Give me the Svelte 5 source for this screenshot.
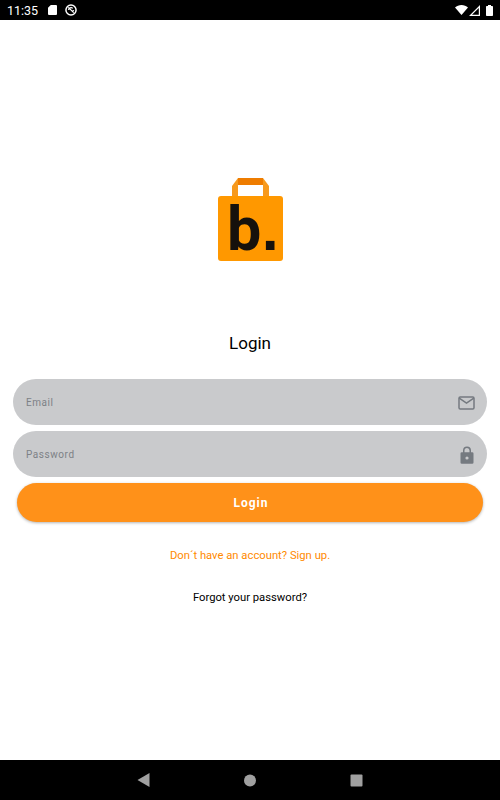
<script lang="ts">
	const fields = [
		{ label: 'Email', icon: 'mail' },
		{ label: 'Password', icon: 'lock' }
	];
</script>

<div class="screen">
	<header class="status">
		<span class="time">11:35</span>
		<svg class="ic-sd" width="9" height="10" viewBox="0 0 9 10"><path d="M2.800 0H8a1 1 0 0 1 1 1v8a1 1 0 0 1-1 1H1a1 1 0 0 1-1-1V2.800z" fill="#fff" /></svg>
		<svg class="ic-sync" width="12" height="12" viewBox="0 0 13 13">
			<circle cx="6.500" cy="6.500" r="5.500" fill="none" stroke="#fff" stroke-width="1.600" />
			<path d="M3.600 3.600l5.800 5.800M3.900 6.600a2.600 2.600 0 0 1 4.500-1.800M9.100 6.600a2.600 2.600 0 0 1-1 2" fill="none" stroke="#fff" stroke-width="1.300" />
		</svg>
		<span class="grow"></span>
		<svg width="13" height="10" viewBox="0 0 13 10"><path d="M0 2.600C1.700 1 4 0 6.500 0S11.300 1 13 2.600L6.500 10z" fill="#fff" /></svg>
		<svg class="ic-signal" width="11" height="11" viewBox="0 0 11 11"><path d="M11 0v11H0z M9.800 3L3 9.800h6.800z" fill="#fff" fill-rule="evenodd" /></svg>
		<svg class="ic-batt" width="7" height="11" viewBox="0 0 7 11"><path d="M2 0h3v1h1.200a.8.8 0 0 1 .8.800v8.400a.8.8 0 0 1-.8.800H.8a.8.8 0 0 1-.8-.8V1.800A.8.8 0 0 1 .8 1H2z" fill="#fff" /></svg>
	</header>

	<main class="body">
		<svg class="logo" width="66" height="88" viewBox="0 0 66 88">
			<path d="M15 18V8l6-8h25l6 8v10h-6V7H21v11z" fill="#f79a1e" />
			<path d="M21 0h25v7H21z" fill="#ee7c00" />
			<rect x="1" y="18" width="65" height="65" rx="3" fill="#ff9800" />
			<text x="10" y="72" class="logo-b">b<tspan class="logo-dot" dx="0.5">.</tspan></text>
		</svg>

		<h1>Login</h1>

		<form class="form">
			{#each fields as f}
				<div class="field">
					<span class="label">{f.label}</span>
					{#if f.icon === 'mail'}
						<svg width="17" height="14" viewBox="0 0 17 14" fill="none" stroke="#757a80" stroke-width="1.500">
							<rect x="1" y="1" width="15" height="12" rx="1.200" />
							<path d="M1.200 2.200l7.300 5 7.300-5" />
						</svg>
					{:else}
						<svg class="lock" width="14" height="18" viewBox="0 0 14 18">
							<path fill-rule="evenodd" fill="#757a80" d="M3 6.200V4.400a4 4 0 0 1 8 0v1.800h1.200A1.300 1.300 0 0 1 13.500 7.500v9a1.300 1.300 0 0 1-1.300 1.300H1.800A1.300 1.300 0 0 1 .5 16.500v-9a1.300 1.300 0 0 1 1.300-1.300zM4.500 6.200h5V4.400a2.500 2.500 0 0 0-5 0zM7 10.400a1.600 1.600 0 1 0 0 3.200 1.600 1.600 0 0 0 0-3.200z" />
						</svg>
					{/if}
				</div>
			{/each}
			<button type="button" class="submit">Login</button>
		</form>

		<a class="signup" href="#signup">Don´t have an account? Sign up.</a>
		<a class="forgot" href="#forgot">Forgot your password?</a>
	</main>

	<nav class="nav">
		<svg width="13" height="14" viewBox="0 0 13 14"><path d="M12.500 0v14L.5 7z" fill="#a0a0a0" /></svg>
		<svg width="13" height="13" viewBox="0 0 13 13"><circle cx="6" cy="6.500" r="6" fill="#a0a0a0" /></svg>
		<svg width="13" height="13" viewBox="0 0 13 13"><rect x=".5" y=".5" width="12" height="12" rx="1" fill="#a0a0a0" /></svg>
	</nav>
</div>

<style>
	:global(body) { margin: 0; background: #fff; }
	.screen { width: 500px; height: 800px; display: flex; flex-direction: column; font-family: Roboto, sans-serif; overflow: hidden; }

	.status { height: 20px; flex: none; background: #000; color: #fff; display: flex; align-items: center; padding: 0 7px; box-sizing: border-box; }
	.time { font-size: 12.500px; width: 30px; margin-right: 11px; }
	.ic-sd { margin-right: 8px; }
	.grow { flex: 1; }
	.ic-signal { margin: 0 6px 0 1px; }

	.body { flex: 1; display: flex; flex-direction: column; align-items: center; padding-top: 158px; }
	.logo { display: block; }
	.logo-b { font-family: Roboto, sans-serif; font-size: 61px; font-weight: 700; fill: #15110c; }
	.logo-dot { font-family: "Liberation Sans", sans-serif; }
	h1 { margin: 65px 0 0; font-size: 17px; font-weight: 400; line-height: 24px; color: #000; }

	.form { width: 474px; margin-top: 24px; display: flex; flex-direction: column; gap: 6px; align-items: center; }
	.field { width: 100%; height: 46px; border-radius: 23px; background: #c9cacc; display: flex; align-items: center; justify-content: space-between; padding: 1px 12px 0 13px; box-sizing: border-box; }
	.lock { margin-right: 1px; }
	.label { font-size: 10px; letter-spacing: 0.55px; color: #7d8186; }
	.submit { width: 466px; height: 39px; border: 0; border-radius: 20px; background: #ff9119; color: #fff; font: 700 12px Roboto, sans-serif; letter-spacing: 1px; box-shadow: 0 1px 3px rgba(0, 0, 0, 0.3); padding: 0 0 0 2px; }

	.signup, .forgot { text-decoration: none; font-size: 11.250px; line-height: 16px; }
	.signup { margin-top: 26px; color: #ff8a00; }
	.forgot { margin-top: 26px; color: #000; }

	.nav { height: 40px; flex: none; background: #000; display: flex; align-items: center; justify-content: space-between; padding: 0 137px; box-sizing: border-box; }
</style>
